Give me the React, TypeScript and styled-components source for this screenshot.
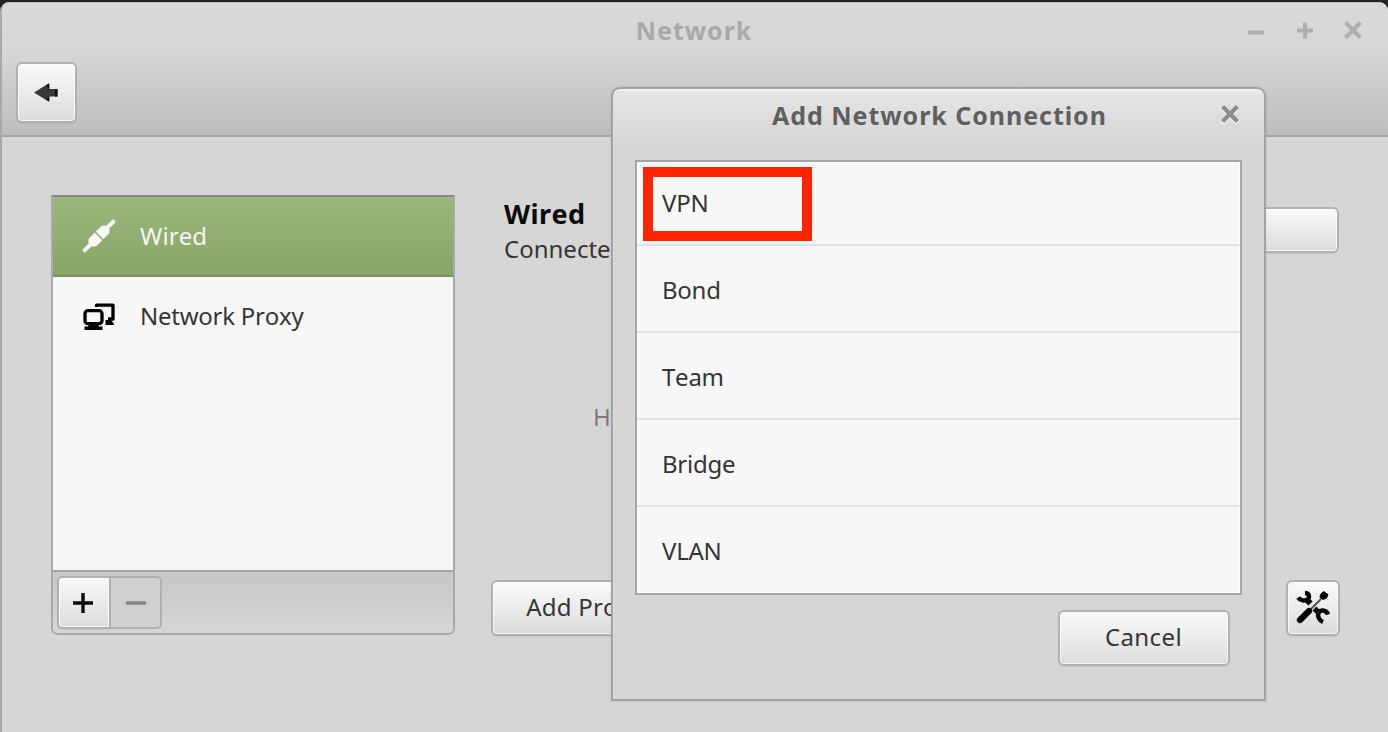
import React from "react";
import styled, { createGlobalStyle, css } from "styled-components";

const Global = createGlobalStyle`
  * { box-sizing: border-box; }
  body { margin: 0; background: #222; overflow: hidden; }
`;

const Desktop = styled.div`
  position: relative;
  width: 1388px;
  height: 732px;
  padding-top: 2px;
  background: #222;
  font-family: "Noto Sans", sans-serif;
  font-size: 24px;
  font-kerning: none;
  letter-spacing: -0.25px;
  line-height: 34px;
  color: #353535;
  white-space: nowrap;
  overflow: hidden;
`;

const Window = styled.div`
  display: flex;
  flex-direction: column;
  height: 730px;
  background: #d6d6d6;
  border-left: 2px solid #a9a9a9;
  border-radius: 9px 9px 0 0;
  overflow: hidden;
`;

const Header = styled.header`
  height: 135px;
  background: linear-gradient(#d9d9d9 0, #d6d6d6 50px, #bdbdbd 132px);
  border-top: 1px solid #bbb;
  border-bottom: 2px solid #a3a3a3;
`;

const TitleBar = styled.div`
  display: grid;
  grid-template-columns: 1fr auto 1fr;
  align-items: center;
  height: 56px;
  padding: 0 23px 0 21px;
`;

const Title = styled.div<{ $color: string; $lift?: number }>`
  grid-column: 2;
  padding-bottom: ${(p) => p.$lift ?? 0}px;
  font-size: 25px;
  font-weight: 700;
  letter-spacing: 0.95px;
  color: ${(p) => p.$color};
`;

const WindowControls = styled.div`
  display: flex;
  justify-content: flex-end;
  gap: 24.5px;
`;

const raised = css`
  background: linear-gradient(#fafafa, #dcdcdc);
  border: 2px solid #b1b1b1;
  box-shadow: inset 0 0 0 1px rgba(255, 255, 255, 0.75), 0 1px 1px rgba(0, 0, 0, 0.08);
`;

const Button = styled.button<{ $w: number; $h: number; $spacing?: number }>`
  ${raised}
  display: flex;
  align-items: center;
  justify-content: center;
  width: ${(p) => p.$w}px;
  height: ${(p) => p.$h}px;
  padding: 0 1px 2px 0;
  border-radius: 6px;
  font: inherit;
  font-kerning: none;
  letter-spacing: ${(p) => p.$spacing ?? 0}px;
  color: #353535;
`;

const NavRow = styled.div`
  display: flex;
  padding: 3px 14px;
`;

const Body = styled.main`
  display: grid;
  grid-template-columns: 404px 1fr;
  gap: 36px;
  padding: 58px 48px 0 49px;
`;

const Sidebar = styled.nav`
  display: flex;
  flex-direction: column;
  height: 440px;
  border: 2px solid #a9a9a9;
  border-top-color: #888;
  border-radius: 0 0 7px 7px;
  background: #f7f7f7;
  overflow: hidden;
`;

const DeviceRow = styled.div<{ $selected?: boolean }>`
  display: flex;
  align-items: center;
  gap: 23px;
  height: 80px;
  padding: 0 0 3px 28px;
  ${(p) =>
    p.$selected &&
    css`
      color: #f7f7f2;
      letter-spacing: 0.1px;
      background: linear-gradient(#9ab87c, #86a566);
      border-bottom: 2px solid #7c915f;
      padding-bottom: 1px;
    `}
`;

const SideToolbar = styled.div`
  display: flex;
  margin-top: auto;
  height: 63px;
  padding: 4px 4px;
  border-top: 2px solid #a5a5a5;
  background: linear-gradient(#c7c7c7, #d6d6d6);
`;

const ToolSegment = styled.button<{ $disabled?: boolean }>`
  ${raised}
  display: flex;
  align-items: center;
  justify-content: center;
  width: 54px;
  height: 53px;
  padding: 0 3px 0 0;
  border-radius: 5px 0 0 5px;
  ${(p) =>
    p.$disabled &&
    css`
      width: 51px;
      padding: 0;
      border-left: 0;
      border-radius: 0 5px 5px 0;
      background: #d0d0d0;
      box-shadow: none;
    `}
`;

const Details = styled.section`
  display: flex;
  flex-direction: column;
  height: 441px;
`;

const DetailHead = styled.div`
  display: flex;
  justify-content: space-between;
  padding: 2px 1px 0 13px;
`;

const DeviceName = styled.h1`
  margin: 0;
  padding-bottom: 2px;
  font-size: 27px;
  line-height: 33px;
  letter-spacing: 0.4px;
  color: #0b0b0b;
`;

const DeviceStatus = styled.div`
  letter-spacing: 0;
`;

const Toggle = styled.div`
  ${raised}
  width: 140px;
  height: 46px;
  margin-top: 10px;
  border-radius: 6px;
`;

const Property = styled.div`
  padding: 134px 0 0 102px;
  color: #7b7b7b;
`;

const Actions = styled.div`
  display: flex;
  justify-content: space-between;
  margin-top: auto;
`;

const Dialog = styled.div`
  position: absolute;
  left: 611px;
  top: 87px;
  width: 655px;
  height: 614px;
  display: flex;
  flex-direction: column;
  border: 2px solid #a3a3a3;
  border-radius: 9px 9px 0 0;
  background: linear-gradient(#e5e5e5, #d6d6d6 56px);
  box-shadow: inset 0 2px 0 #f1f1f1, inset 1px 0 0 #dedede, 0 0 2px rgba(0, 0, 0, 0.15);
`;

const DialogTitleBar = styled.div`
  display: grid;
  grid-template-columns: 1fr auto 1fr;
  align-items: center;
  justify-items: end;
  height: 52px;
  padding: 0 22px 0 24px;
`;

const TypeList = styled.div`
  height: 435px;
  margin: 19px 22px 0;
  border: 2px solid #a5a5a5;
  background: #f7f7f7;
  box-shadow: inset 0 0 0 1px #fff;
`;

const TypeRow = styled.div`
  display: flex;
  align-items: center;
  height: 87px;
  padding: 2px 0 0 25px;
  border-bottom: 2px solid #e3e3e3;
  &:first-child {
    height: 84px;
    padding-top: 0;
  }
  &:last-child {
    height: 86px;
    border-bottom: 0;
  }
`;

const Highlight = styled.div`
  position: absolute;
  left: 643px;
  top: 167px;
  width: 169px;
  height: 74px;
  border: 10px solid #ff2400;
`;

const DialogActions = styled.div`
  display: flex;
  justify-content: flex-end;
  padding: 15px 34px 0 0;
`;

const Glyph = ({ d, color, shine }: { d: string; color: string; shine?: boolean }) => (
  <svg width="24" height="24" viewBox="0 0 24 24" fill="none" strokeWidth="4.2">
    {shine && <path d={d} stroke="#f0f0f0" transform="translate(0 2)" />}
    <path d={d} stroke={color} />
  </svg>
);

const CROSS = "M4.6 3.6 19.4 18.4M19.4 3.6 4.6 18.4";

const WiredIcon = () => (
  <svg width="36" height="36" viewBox="0 0 36 36">
    <g transform="rotate(-45 18 18)" fill="#f8f8f4">
      <rect x="-4.2" y="16" width="12" height="4" rx="1.5" />
      <rect x="28" y="16" width="12" height="4" rx="1.5" />
      <path d="M5 17Q7 13 9.5 12.6H17.4V23.4H9.5Q7 23 5 19Z" />
      <path d="M18.8 12.6H26.5Q29 13 31 17V19Q29 23 26.5 23.4H18.8Z" />
    </g>
  </svg>
);

const ProxyIcon = () => (
  <svg width="36" height="36" viewBox="0 0 36 36" fill="none" stroke="#000" strokeWidth="3.3">
    <path d="M15.5 9V7.2H32V21H27" strokeLinejoin="round" />
    <path d="M24.5 27V22H30L33 26V27Z" fill="#000" stroke="none" />
    <rect x="4" y="12.7" width="17" height="13" rx="3" />
    <path d="M8 26H17L18 28.5H21.5V32H3.5V28.5H7Z" fill="#000" stroke="none" />
  </svg>
);

const ToolsIcon = () => (
  <svg width="36" height="36" viewBox="0 0 36 36" fill="none" stroke="#050505">
    <path d="M26 10 14 22" stroke="#555" strokeWidth="2.2" />
    <path d="M14 22 5 31" strokeWidth="6.2" strokeLinecap="round" />
    <path d="M28.5 2.5 33 5.5 31.5 9 28 10.5 25 8.5 25.5 5.5Z" fill="#050505" strokeWidth="1" />
    <path d="M10 4C14.5 4 15 8 12.5 10.5C10 12.5 5 11.5 3.2 8.5" strokeWidth="4.4" />
    <path d="M11 10 15.5 14.5" strokeWidth="6" />
    <path d="M33 25.5C31 20 25 21 23.5 24C22 27.5 24.5 31.5 28 33" strokeWidth="4.4" />
    <path d="M19.5 19.5 24.5 24.5" strokeWidth="5.4" />
  </svg>
);

const types = ["VPN", "Bond", "Team", "Bridge", "VLAN"];

export default function App() {
  return (
    <Desktop>
      <Global />
      <Window>
        <Header>
          <TitleBar>
            <Title $color="#a9a9a9" $lift={2}>Network</Title>
            <WindowControls>
              <Glyph color="#afafaf" d="M4 13.5H20" />
              <Glyph color="#afafaf" d="M4 11.5H20M12 3.5V19.5" />
              <Glyph color="#afafaf" d={CROSS} />
            </WindowControls>
          </TitleBar>
          <NavRow>
            <Button $w={61} $h={61} aria-label="Back">
              <svg width="24" height="20" viewBox="0 0 24 20">
                <path d="M0 10.5 14.5 1.5 15.5 2V7H23.5V14.5H15.5V19L14.5 19.5Z" fill="#383838" />
                <path d="M12 3.5 15 1.5V7M12 17.5 15 19.5V14.5M21 7H23.5V14.5H21" fill="#111" />
              </svg>
            </Button>
          </NavRow>
        </Header>
        <Body>
          <Sidebar>
            <DeviceRow $selected>
              <WiredIcon />
              Wired
            </DeviceRow>
            <DeviceRow>
              <ProxyIcon />
              Network Proxy
            </DeviceRow>
            <SideToolbar>
              <ToolSegment aria-label="Add">
                <svg width="22" height="22" viewBox="0 0 22 22">
                  <path d="M1 11H21M11 1V21" stroke="#080808" strokeWidth="3.4" />
                </svg>
              </ToolSegment>
              <ToolSegment $disabled aria-label="Remove">
                <svg width="22" height="22" viewBox="0 0 22 22">
                  <path d="M1 11H21" stroke="#858585" strokeWidth="3.4" />
                </svg>
              </ToolSegment>
            </SideToolbar>
          </Sidebar>
          <Details>
            <DetailHead>
              <div>
                <DeviceName>Wired</DeviceName>
                <DeviceStatus>Connected</DeviceStatus>
              </div>
              <Toggle />
            </DetailHead>
            <Property>Hardware Address</Property>
            <Actions>
              <Button $w={218} $h={56} $spacing={0.2}>Add Profile...</Button>
              <Button $w={54} $h={56} aria-label="Settings">
                <ToolsIcon />
              </Button>
            </Actions>
          </Details>
        </Body>
      </Window>
      <Dialog>
        <DialogTitleBar>
          <Title $color="#5f5f5f">Add Network Connection</Title>
          <Glyph shine color="#8d8d8d" d={CROSS} />
        </DialogTitleBar>
        <TypeList>
          {types.map((type) => (
            <TypeRow key={type}>{type}</TypeRow>
          ))}
        </TypeList>
        <DialogActions>
          <Button $w={172} $h={56} $spacing={0.4}>Cancel</Button>
        </DialogActions>
      </Dialog>
      <Highlight />
    </Desktop>
  );
}
